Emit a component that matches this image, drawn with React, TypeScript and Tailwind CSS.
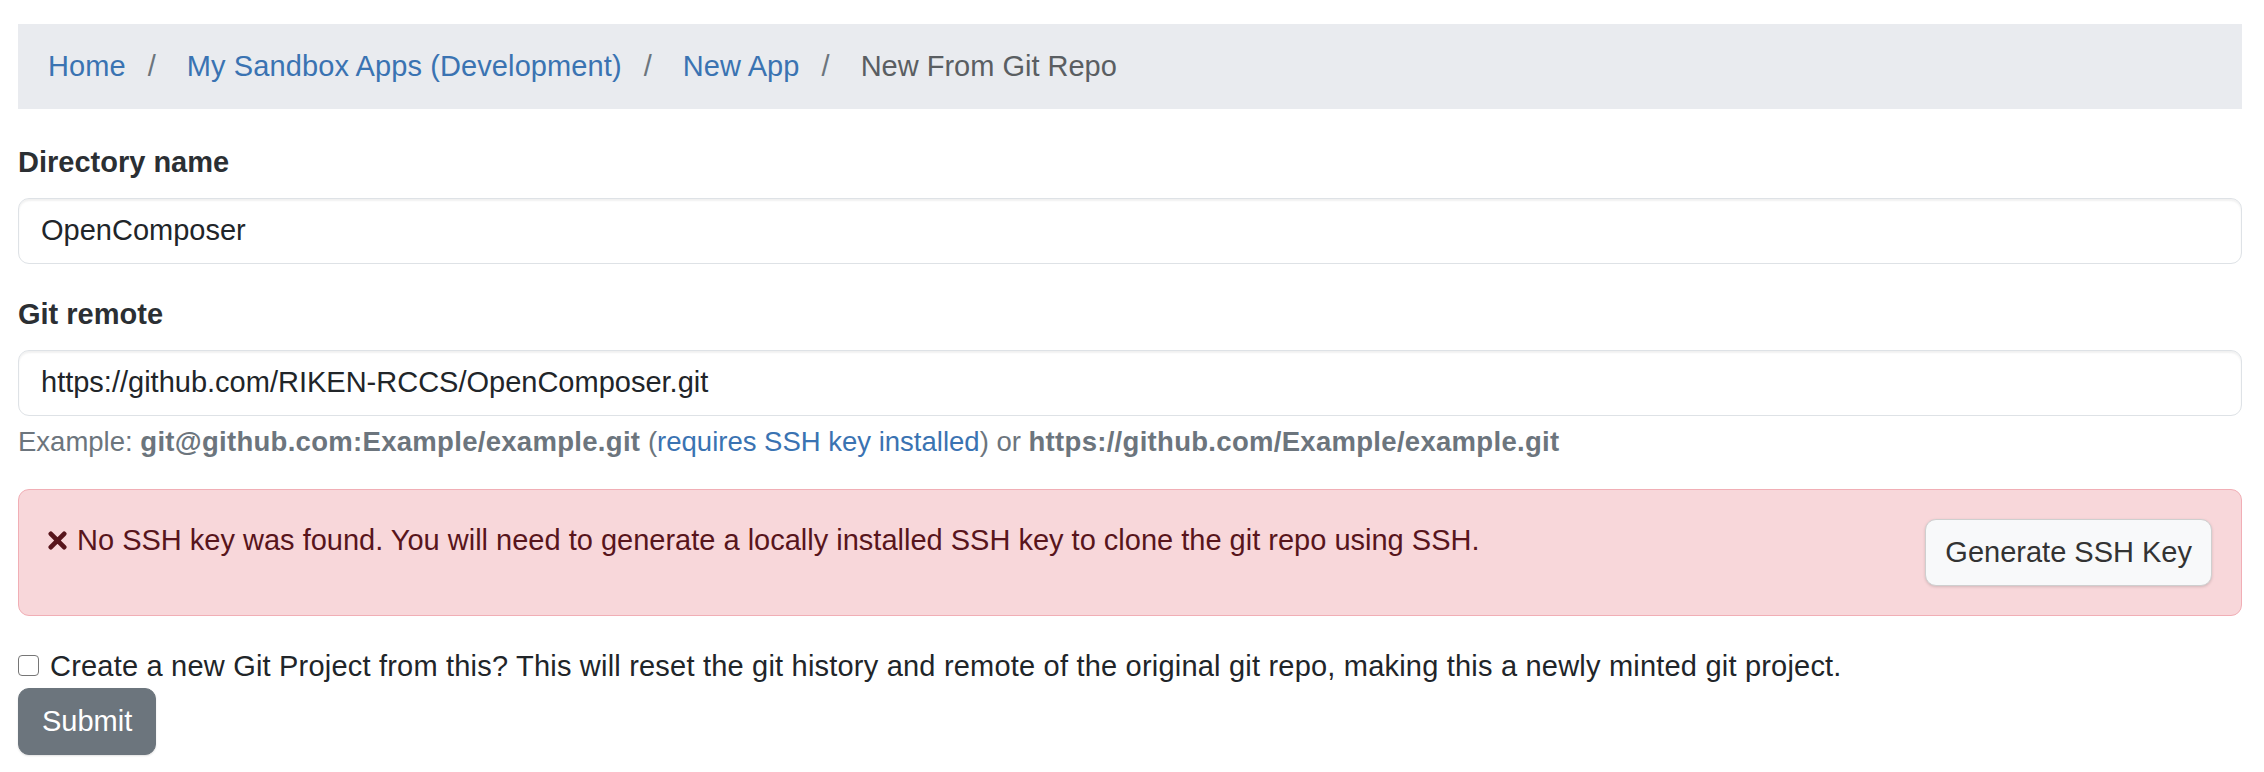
import React from "react";

const font = { fontFamily: '"Liberation Sans", Arial, Helvetica, sans-serif' };

function Crumbs() {
  const items = ["Home", "My Sandbox Apps (Development)", "New App"];
  return (
    <nav className="bg-[#e9ebef] h-[85px] px-[30px] flex items-center text-[29px] leading-[43px]">
      {items.map((t) => (
        <React.Fragment key={t}>
          <a className="text-[#3a73b2] tracking-[0.1px]">{t}</a>
          <span className="text-[#6c757d] ml-[22px] mr-[31px]">/</span>
        </React.Fragment>
      ))}
      <span className="text-[#5a5e62]">New From Git Repo</span>
    </nav>
  );
}

function Field({ label, value }: { label: string; value: string }) {
  return (
    <div>
      <label className="block font-bold text-[#2b2f33] text-[29px] leading-[43px] mb-[14px]">{label}</label>
      <div className="h-[66px] border border-[#dee2e6] rounded-[11px] px-[22px] flex items-center text-[29px] text-[#212529] shadow-[inset_0_2px_2px_rgba(0,0,0,0.06)]">
        {value}
      </div>
    </div>
  );
}

export default function App() {
  return (
    <div className="bg-white w-[2264px] h-[772px] pt-[24px] pl-[18px] pr-[22px]" style={font}>
      <Crumbs />

      <div className="mt-[32px]">
        <Field label="Directory name" value="OpenComposer" />
      </div>

      <div className="mt-[29px]">
        <Field label="Git remote" value="https://github.com/RIKEN-RCCS/OpenComposer.git" />
        <p className="mt-[7px] text-[27.5px] leading-[38px] text-[#6c757d]">
          Example: <b className="tracking-[0.3px]">git@github.com:Example/example.git</b> (
          <a className="text-[#3a73b2]">requires SSH key installed</a>) or{" "}
          <b className="tracking-[0.3px]">https://github.com/Example/example.git</b>
        </p>
      </div>

      <div className="mt-[28px] bg-[#f8d7da] border border-[#f1aeb5] rounded-[11px] p-[29px] flex justify-between items-start text-[#58151c]">
        <div className="flex items-center text-[29px] leading-[43px]">
          <svg width="19" height="19" viewBox="0 0 20 20" className="mr-[10px]">
            <path d="M3 3 L17 17 M17 3 L3 17" stroke="#58151c" strokeWidth="5" strokeLinecap="round" />
          </svg>
          No SSH key was found. You will need to generate a locally installed SSH key to clone the git repo using SSH.
        </div>
        <button className="h-[67px] px-[19px] bg-[#f8f9fa] border border-[#cfcfcf] rounded-[11px] text-[29px] text-[#333] shadow-[0_1px_3px_rgba(0,0,0,0.15)]">
          Generate SSH Key
        </button>
      </div>

      <label className="mt-[29px] flex items-center text-[29px] leading-[43px] text-[#212529] tracking-[0.2px]">
        <input
          type="checkbox"
          className="appearance-none w-[21px] h-[21px] border-[1.5px] border-[#767676] rounded-[4px] bg-white mr-[11px] -mt-[3px]"
        />
        Create a new Git Project from this? This will reset the git history and remote of the original git repo, making this a newly minted git project.
      </label>

      <button className="h-[67px] px-[23px] bg-[#6c757d] border border-[#6c757d] rounded-[11px] text-[29px] text-white shadow-[0_1px_2px_rgba(0,0,0,0.12)]">
        Submit
      </button>
    </div>
  );
}
